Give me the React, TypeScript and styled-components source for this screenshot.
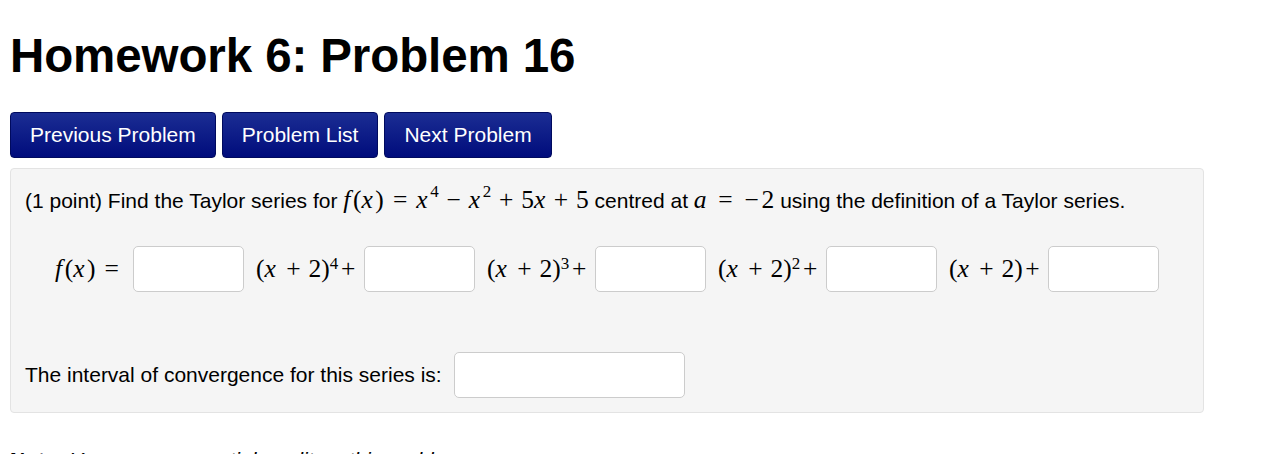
import styled, { createGlobalStyle } from "styled-components";

const GlobalStyle = createGlobalStyle`
  body {
    margin: 0;
    background: #ffffff;
    font-family: "Liberation Sans", Arial, sans-serif;
    color: #000;
  }
`;

function App() {
  return (
    <>
      <GlobalStyle />
      <Page>
        <Title>Homework 6: Problem 16</Title>
        <Nav>
          <NavButton>Previous Problem</NavButton>
          <NavButton>Problem List</NavButton>
          <NavButton>Next Problem</NavButton>
        </Nav>
        <ProblemPanel>
          <Statement>
            (1 point) Find the Taylor series for{" "}
            <Math>
              <Var>f</Var>(<Var>x</Var>)<Rel>=</Rel>
              <Var>x</Var>
              <HighSup>4</HighSup>
              <Bin>−</Bin>
              <Var>x</Var>
              <HighSup>2</HighSup>
              <Bin>+</Bin>5<Var $tight>x</Var>
              <Bin>+</Bin>5
            </Math>{" "}
            centred at{" "}
            <Math>
              <Var>a</Var>
              <Rel>=</Rel>
              <Op>−</Op>2
            </Math>{" "}
            using the definition of a Taylor series.
          </Statement>
          <AnswerRow>
            <Term $first>
              <Var>f</Var>(<Var>x</Var>)<Rel>=</Rel>
            </Term>
            <AnswerBox />
            <Term>
              (<Var>x</Var>
              <Bin>+</Bin>2)<Sup>4</Sup>
              <Op>+</Op>
            </Term>
            <AnswerBox />
            <Term>
              (<Var>x</Var>
              <Bin>+</Bin>2)<Sup>3</Sup>
              <Op>+</Op>
            </Term>
            <AnswerBox />
            <Term>
              (<Var>x</Var>
              <Bin>+</Bin>2)<Sup>2</Sup>
              <Op>+</Op>
            </Term>
            <AnswerBox />
            <Term>
              (<Var>x</Var>
              <Bin>+</Bin>2)<Op>+</Op>
            </Term>
            <AnswerBox />
          </AnswerRow>
          <IntervalRow>
            <span>The interval of convergence for this series is:</span>
            <AnswerBox $wide />
          </IntervalRow>
        </ProblemPanel>
        <Note>
          <b>Note:</b> <i>You can earn partial credit on this problem.</i>
        </Note>
      </Page>
    </>
  );
}

export default App;

const Page = styled.div`
  padding: 0 10px;
  width: 1194px;
`;

const Title = styled.h1`
  margin: 0;
  padding-top: 29px;
  height: 83px;
  box-sizing: border-box;
  font-size: 47.5px;
  font-weight: bold;
  line-height: 54px;
  letter-spacing: -0.1px;
`;

const Nav = styled.div`
  display: flex;
  gap: 6px;
  margin-top: 29px;
`;

const NavButton = styled.button`
  height: 46px;
  padding: 0 19px;
  border: 1px solid #000a5e;
  border-radius: 4px;
  background: linear-gradient(#1b2d93, #000c7c);
  color: #ffffff;
  font-family: "Liberation Sans", Arial, sans-serif;
  font-size: 21px;
  cursor: pointer;
`;

const ProblemPanel = styled.div`
  margin-top: 10px;
  box-sizing: border-box;
  height: 245px;
  background: #f5f5f5;
  border: 1px solid #e3e3e3;
  border-radius: 4px;
  padding: 16px 14px 0 14px;
  font-size: 21px;
`;

const Statement = styled.div`
  line-height: 30px;
  white-space: nowrap;
`;

const Math = styled.span`
  font-family: "Liberation Serif", "Times New Roman", serif;
  font-size: 25.5px;
`;

const Var = styled.i<{ $tight?: boolean }>`
  font-family: "Liberation Serif", "Times New Roman", serif;
  margin-right: ${(p) => (p.$tight ? "0.03em" : "0.1em")};
`;

const Op = styled.span`
  display: inline-block;
  width: 0.778em;
  text-align: center;
`;

const Rel = styled(Op)`
  margin: 0 0.25em;
`;

const Bin = styled(Op)`
  margin: 0 0.2em;
`;

const HighSup = styled.sup`
  font-size: 17px;
  vertical-align: 11px;
  line-height: 0;
`;

const Sup = styled.sup`
  font-size: 17px;
  vertical-align: 8px;
  line-height: 0;
`;

const AnswerRow = styled.div`
  display: flex;
  align-items: center;
  margin-top: 30px;
  padding-left: 30px;
`;

const Term = styled.span<{ $first?: boolean }>`
  font-family: "Liberation Serif", "Times New Roman", serif;
  font-size: 25.5px;
  white-space: nowrap;
  margin: ${(p) => (p.$first ? "0 5px 0 0" : "0 6px 0 12px")};
`;

const AnswerBox = styled.input<{ $wide?: boolean }>`
  box-sizing: border-box;
  width: ${(p) => (p.$wide ? "231px" : "111px")};
  height: 46px;
  background: #ffffff;
  border: 1.5px solid #cccccc;
  border-radius: 5px;
  padding: 4px 6px;
  font-size: 18px;
  outline: none;
`;

const IntervalRow = styled.div`
  display: flex;
  align-items: center;
  gap: 12px;
  margin-top: 60px;
`;

const Note = styled.div`
  margin-top: 35px;
  font-size: 21px;
  line-height: 24px;
`;
